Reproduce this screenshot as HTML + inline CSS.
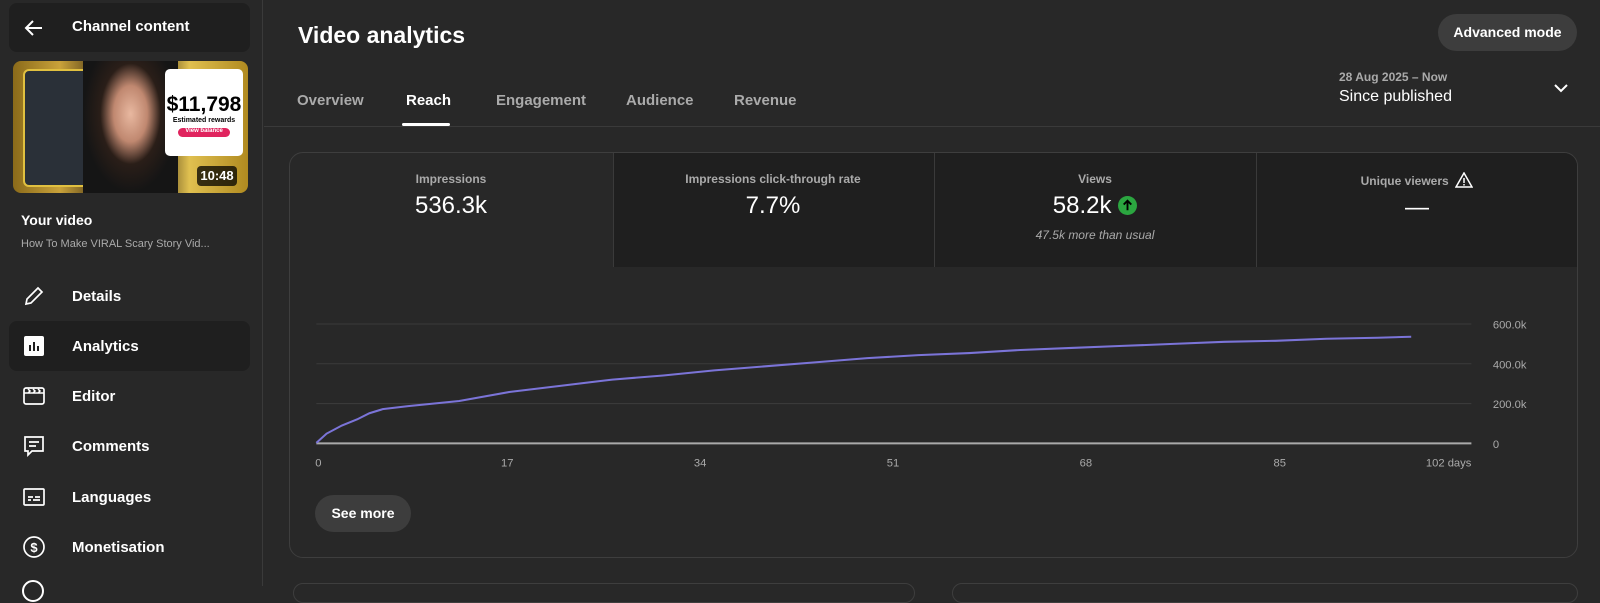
<!DOCTYPE html>
<html><head><meta charset="utf-8"><style>
*{margin:0;padding:0;box-sizing:border-box}
body{width:1600px;height:586px;overflow:hidden;background:#282828;font-family:"Liberation Sans",sans-serif;color:#fff;position:relative}
.a{position:absolute}
.side{left:0;top:0;width:263px;height:586px;border-right:1px solid #3a3a3a}
.nav{left:9px;width:241px;height:50px;display:flex;align-items:center;font-size:15px;font-weight:bold}
.nav svg{position:absolute;left:13px}
.nav span{position:absolute;left:63px}
.tab{top:92px;font-size:15px;color:#aaa;font-weight:bold}
.col{top:153px;height:113px;text-align:center}
.lbl{font-size:12px;color:#aaa;font-weight:bold;margin-top:19px}
.val{font-size:24px;margin-top:6px}
</style></head><body>
<div class="a side"></div>
<div class="a" style="left:9px;top:3px;width:241px;height:49px;background:#1f1f1f;border-radius:8px"></div>
<svg class="a" style="left:22px;top:16px" width="24" height="24" viewBox="0 0 24 24"><path d="M20 12H4M11 5l-7 7 7 7" stroke="#fff" stroke-width="2" fill="none"/></svg>
<div class="a" style="left:72px;top:18px;font-size:15px;font-weight:bold">Channel content</div>
<div class="a" style="left:13px;top:61px;width:235px;height:132px;border-radius:8px;overflow:hidden;background:linear-gradient(90deg,#8a6a1a,#c9a23a 20%,#3a2a10 40%,#d8b27a 50%,#3a2a10 60%,#e0c050 75%,#b08a20)">
 <div class="a" style="left:10px;top:8px;width:77px;height:118px;border:2px solid #e0c040;background:#2a3038;border-radius:6px"></div>
 <div class="a" style="left:70px;top:0;width:95px;height:132px;background:radial-gradient(ellipse at 50% 40%,#e8b8a0 0,#c08870 25%,#2a1e18 45%,#151515 70%)"></div>
 <div class="a" style="left:152px;top:8px;width:78px;height:87px;background:#fff;border-radius:5px;color:#000;font-weight:bold;text-align:center">
  <div style="font-size:21px;margin-top:24px">$11,798</div>
  <div style="font-size:7px">Estimated rewards</div>
  <div style="margin:4px auto 0;width:52px;height:9px;background:#e0245e;border-radius:5px;font-size:6px;color:#fff">View balance</div>
 </div>
 <div class="a" style="left:184px;top:105px;width:40px;height:20px;background:rgba(0,0,0,.75);border-radius:4px;font-size:13px;font-weight:bold;text-align:center;line-height:20px">10:48</div>
</div>
<div class="a" style="left:21px;top:212px;font-size:14px;font-weight:bold">Your video</div>
<div class="a" style="left:21px;top:238px;font-size:11px;color:#aaa">How To Make VIRAL Scary Story Vid...</div>
<div class="a nav" style="top:271px"><svg width="24" height="24" viewBox="0 0 24 24"><path d="M4 20l1-5L16 4l4 4L9 19z" stroke="#fff" stroke-width="1.7" fill="none"/></svg><span>Details</span></div>
<div class="a nav" style="top:321px;background:#1f1f1f;border-radius:8px"><svg width="24" height="24" viewBox="0 0 24 24"><rect x="2" y="2" width="20" height="20" rx="2" fill="#fff"/><path d="M8 17V11M12 17V8M16 17v-5" stroke="#1f1f1f" stroke-width="2"/></svg><span>Analytics</span></div>
<div class="a nav" style="top:371px"><svg width="24" height="24" viewBox="0 0 24 24"><rect x="2" y="4" width="20" height="16" rx="2" stroke="#fff" stroke-width="1.7" fill="none"/><path d="M2 9h20M6 5l2 2-2 2M11 5l2 2-2 2M16 5l2 2-2 2" stroke="#fff" stroke-width="1.5" fill="none"/></svg><span>Editor</span></div>
<div class="a nav" style="top:421px"><svg width="24" height="24" viewBox="0 0 24 24"><path d="M3 3h18v14H10l-4 4v-4H3z" stroke="#fff" stroke-width="1.7" fill="none"/><path d="M7 8h10M7 12h7" stroke="#fff" stroke-width="1.7"/></svg><span>Comments</span></div>
<div class="a nav" style="top:472px"><svg width="24" height="24" viewBox="0 0 24 24"><rect x="2" y="4" width="20" height="16" rx="1" stroke="#fff" stroke-width="1.7" fill="none"/><path d="M6 12h5M13 12h5M6 15h3M11 15h7" stroke="#fff" stroke-width="1.7"/></svg><span>Languages</span></div>
<div class="a nav" style="top:522px"><svg width="24" height="24" viewBox="0 0 24 24"><circle cx="12" cy="12" r="10" stroke="#fff" stroke-width="1.7" fill="none"/><text x="12" y="17" text-anchor="middle" font-size="13" font-weight="bold" fill="#fff" font-family="Liberation Sans">$</text></svg><span>Monetisation</span></div>
<div class="a" style="left:22px;top:580px;width:22px;height:22px;border:2px solid #fff;border-radius:50%"></div>

<div class="a" style="left:298px;top:22px;font-size:23px;font-weight:bold">Video analytics</div>
<div class="a tab" style="left:297px">Overview</div>
<div class="a tab" style="left:406px;color:#fff">Reach</div>
<div class="a tab" style="left:496px">Engagement</div>
<div class="a tab" style="left:626px">Audience</div>
<div class="a tab" style="left:734px">Revenue</div>
<div class="a" style="left:402px;top:123px;width:48px;height:3px;background:#fff;border-radius:2px"></div>
<div class="a" style="left:264px;top:126px;width:1336px;height:1px;background:#3a3a3a"></div>
<div class="a" style="left:1438px;top:14px;width:139px;height:37px;background:#3d3d3d;border-radius:19px;font-size:14px;font-weight:bold;text-align:center;line-height:37px">Advanced mode</div>
<div class="a" style="left:1339px;top:70px;font-size:12px;color:#aaa;font-weight:bold">28 Aug 2025 – Now</div>
<div class="a" style="left:1339px;top:88px;font-size:16px">Since published</div>
<svg class="a" style="left:1552px;top:81px" width="18" height="14" viewBox="0 0 18 14"><path d="M3 4l6 6 6-6" stroke="#fff" stroke-width="2" fill="none"/></svg>

<div class="a" style="left:289px;top:152px;width:1289px;height:406px;border:1px solid #3e3e3e;border-radius:14px;overflow:hidden">
 <div class="a" style="left:323px;top:0;width:966px;height:114px;background:#1f1f1f"></div>
 <div class="a" style="left:323px;top:0;width:1px;height:114px;background:#3a3a3a"></div>
 <div class="a" style="left:644px;top:0;width:1px;height:114px;background:#3a3a3a"></div>
 <div class="a" style="left:966px;top:0;width:1px;height:114px;background:#3a3a3a"></div>
</div>
<div class="a col" style="left:290px;width:322px"><div class="lbl">Impressions</div><div class="val">536.3k</div></div>
<div class="a col" style="left:612px;width:322px"><div class="lbl">Impressions click-through rate</div><div class="val">7.7%</div></div>
<div class="a col" style="left:934px;width:322px"><div class="lbl">Views</div><div class="val">58.2k <svg width="19" height="19" viewBox="0 0 20 20" style="vertical-align:-2px"><circle cx="10" cy="10" r="10" fill="#2ba640"/><path d="M10 15V5M6 9l4-4 4 4" stroke="#000" stroke-width="2" fill="none"/></svg></div><div style="font-size:12px;font-style:italic;color:#aaa;margin-top:8px">47.5k more than usual</div></div>
<div class="a col" style="left:1256px;width:322px"><div class="lbl">Unique viewers &nbsp;<svg width="18" height="16" viewBox="0 0 18 16" style="vertical-align:-3px"><path d="M9 1L1 15h16z" stroke="#fff" stroke-width="1.5" fill="none"/><path d="M9 6v5M9 12v1.5" stroke="#fff" stroke-width="1.5"/></svg></div><div class="val">—</div></div>

<svg class="a" style="left:0;top:0" width="1600" height="586" viewBox="0 0 1568 574.3">
 <g stroke="#3a3a3a" stroke-width="1"><line x1="310" y1="317.5" x2="1442" y2="317.5"/><line x1="310" y1="356.5" x2="1442" y2="356.5"/><line x1="310" y1="395.5" x2="1442" y2="395.5"/></g>
 <line x1="310" y1="434.5" x2="1442" y2="434.5" stroke="#aaa" stroke-width="2"/>
 <polyline fill="none" stroke="#7b74d8" stroke-width="2" points="310,434 320,425 335,417 350,411 362,405 375,401 400,398 450,393 500,384 550,378 600,372 650,368 700,363 750,359 800,355 850,351 900,348 950,346 1000,343 1050,341 1100,339 1150,337 1200,335 1250,334 1300,332 1350,331 1383,330"/>
 <g font-family="Liberation Sans" font-size="11" fill="#aaa">
  <text x="1463" y="322">600.0k</text><text x="1463" y="361">400.0k</text><text x="1463" y="400">200.0k</text><text x="1463" y="439">0</text>
  <text x="309" y="457">0</text><text x="491" y="457">17</text><text x="680" y="457">34</text><text x="869" y="457">51</text><text x="1058" y="457">68</text><text x="1248" y="457">85</text><text x="1442" y="457" text-anchor="end">102 days</text>
 </g>
</svg>
<div class="a" style="left:315px;top:495px;width:96px;height:37px;background:#3d3d3d;border-radius:19px;font-size:14px;font-weight:bold;text-align:center;line-height:37px">See more</div>
<div class="a" style="left:293px;top:583px;width:622px;height:20px;border:1px solid #3e3e3e;border-radius:14px"></div>
<div class="a" style="left:952px;top:583px;width:626px;height:20px;border:1px solid #3e3e3e;border-radius:14px"></div>
</body></html>
